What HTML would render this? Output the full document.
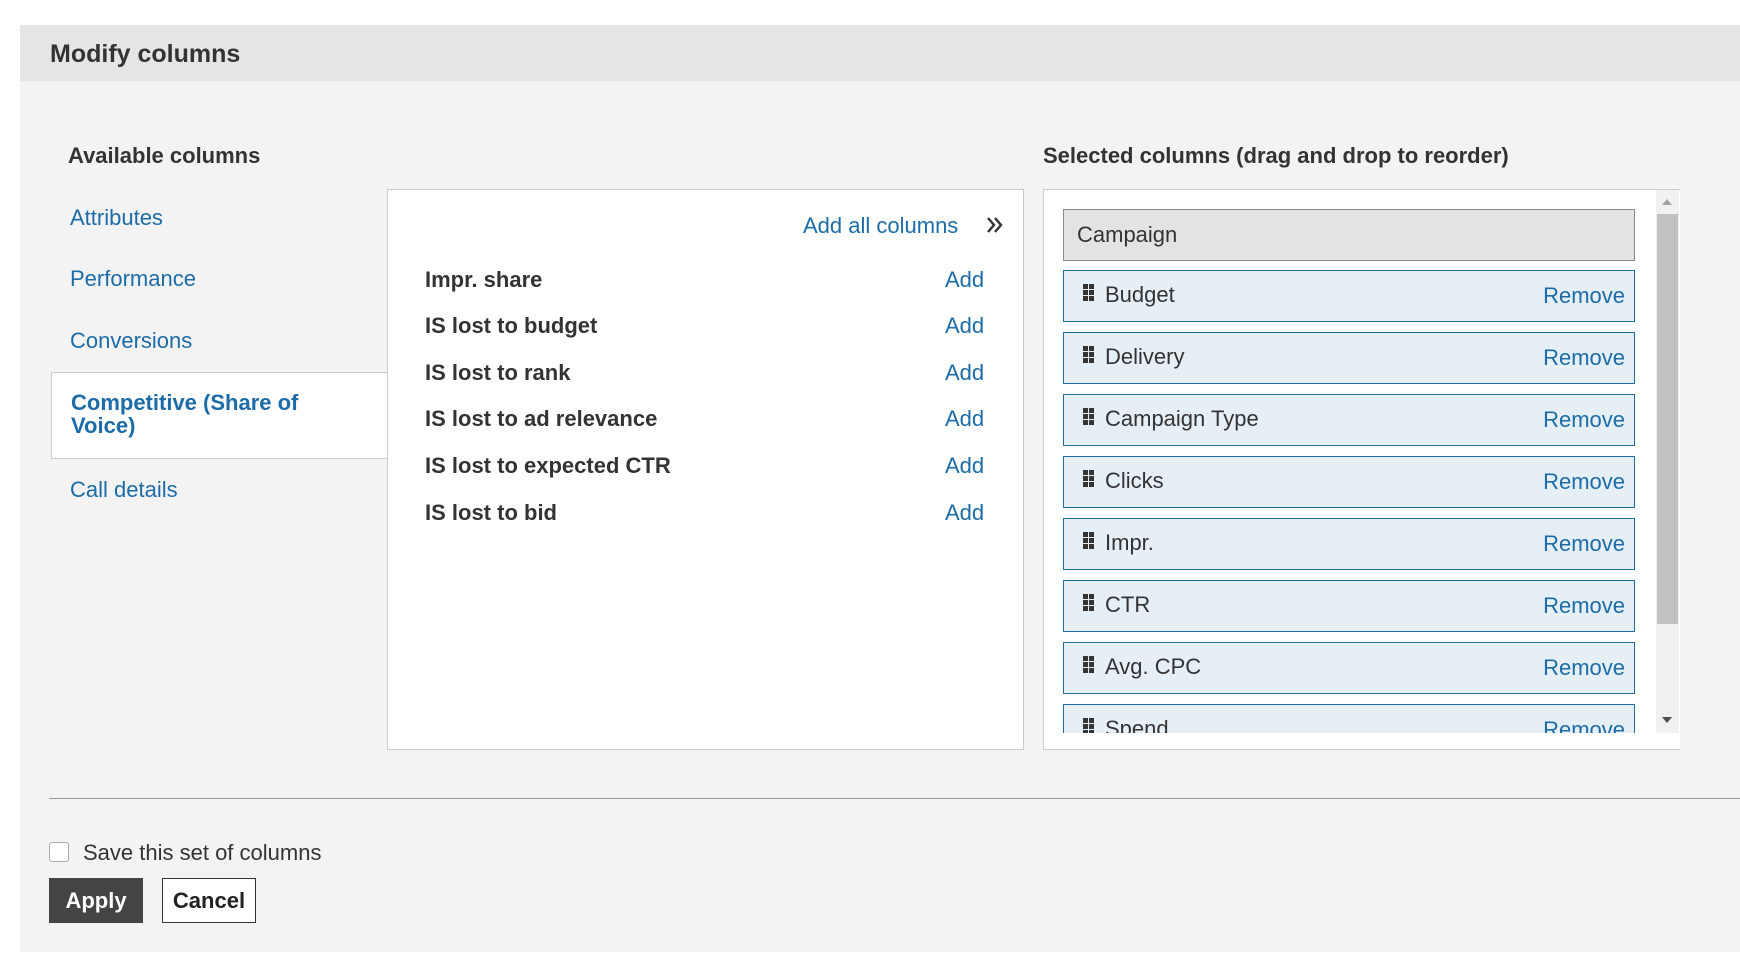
<!DOCTYPE html>
<html><head><style>
*{box-sizing:border-box;margin:0;padding:0}
body{width:1740px;height:973px;background:#fff;font-family:"Liberation Sans",Arial,sans-serif;position:relative;overflow:hidden;color:#333}
.a{position:absolute;white-space:nowrap}
.lnk{color:#1b6ca8}
.b{font-weight:bold}
.item{position:absolute;left:1063px;width:572px;height:52px;background:#e6eef6;border:1px solid #1f6ea5;font-size:22px}
.item .t{position:absolute;left:41px;top:11px;color:#333}
.item .r{position:absolute;right:9px;top:12px;color:#1b6ca8}
.grip{position:absolute;left:19px;top:13px;display:grid;grid-template-columns:5px 5px;gap:1px}
.grip i{width:5px;height:5px;background:#333;display:block}
</style></head><body>
<div class="a" style="left:20px;top:25px;width:1720px;height:56px;background:#e5e5e5"></div>
<div class="a b" style="left:50px;top:40px;font-size:25px;color:#333">Modify columns</div>
<div class="a" style="left:20px;top:81px;width:1720px;height:871px;background:#f3f3f3"></div>

<div class="a b" style="left:68px;top:143px;font-size:22px">Available columns</div>
<div class="a b" style="left:1043px;top:143px;font-size:22px">Selected columns (drag and drop to reorder)</div>

<div class="a lnk" style="left:70px;top:205px;font-size:22px">Attributes</div>
<div class="a lnk" style="left:70px;top:266px;font-size:22px">Performance</div>
<div class="a lnk" style="left:70px;top:328px;font-size:22px">Conversions</div>
<div class="a" style="left:51px;top:372px;width:340px;height:87px;background:#fff;border:1px solid #ccc;border-right:none"></div>
<div class="a lnk b" style="left:71px;top:391px;font-size:22px;line-height:23px">Competitive (Share of<br>Voice)</div>
<div class="a lnk" style="left:70px;top:477px;font-size:22px">Call details</div>

<div class="a" style="left:387px;top:189px;width:637px;height:561px;background:#fff;border:1px solid #ccc"></div>
<div class="a" style="left:388px;top:372px;width:2px;height:86px;background:#fff"></div>
<div class="a lnk" style="left:803px;top:213px;font-size:22px">Add all columns</div>
<svg class="a" style="left:985px;top:215px" width="20" height="20" viewBox="0 0 20 20"><path d="M3 3l6 7-6 7M10 3l6 7-6 7" fill="none" stroke="#333" stroke-width="2.4"/></svg>
<div class="a b" style="left:425px;top:267px;font-size:22px">Impr. share</div>
<div class="a b" style="left:425px;top:313px;font-size:22px">IS lost to budget</div>
<div class="a b" style="left:425px;top:360px;font-size:22px">IS lost to rank</div>
<div class="a b" style="left:425px;top:406px;font-size:22px">IS lost to ad relevance</div>
<div class="a b" style="left:425px;top:453px;font-size:22px">IS lost to expected CTR</div>
<div class="a b" style="left:425px;top:500px;font-size:22px">IS lost to bid</div>
<div class="a lnk" style="left:945px;top:267px;font-size:22px">Add</div>
<div class="a lnk" style="left:945px;top:313px;font-size:22px">Add</div>
<div class="a lnk" style="left:945px;top:360px;font-size:22px">Add</div>
<div class="a lnk" style="left:945px;top:406px;font-size:22px">Add</div>
<div class="a lnk" style="left:945px;top:453px;font-size:22px">Add</div>
<div class="a lnk" style="left:945px;top:500px;font-size:22px">Add</div>

<div class="a" style="left:1043px;top:189px;width:637px;height:561px;background:#fff;border:1px solid #ccc;border-right:none"></div>
<div class="a" style="left:1044px;top:190px;width:612px;height:543px;overflow:hidden">
<div style="position:relative;left:-1044px;top:-190px;">
<div class="a" style="left:1063px;top:209px;width:572px;height:52px;background:#e3e3e3;border:1px solid #888;font-size:22px"><span class="a" style="left:13px;top:12px">Campaign</span></div>
<div class="item" style="top:270px"><div class="grip"><i></i><i></i><i></i><i></i><i></i><i></i></div><span class="t">Budget</span><span class="r">Remove</span></div>
<div class="item" style="top:332px"><div class="grip"><i></i><i></i><i></i><i></i><i></i><i></i></div><span class="t">Delivery</span><span class="r">Remove</span></div>
<div class="item" style="top:394px"><div class="grip"><i></i><i></i><i></i><i></i><i></i><i></i></div><span class="t">Campaign Type</span><span class="r">Remove</span></div>
<div class="item" style="top:456px"><div class="grip"><i></i><i></i><i></i><i></i><i></i><i></i></div><span class="t">Clicks</span><span class="r">Remove</span></div>
<div class="item" style="top:518px"><div class="grip"><i></i><i></i><i></i><i></i><i></i><i></i></div><span class="t">Impr.</span><span class="r">Remove</span></div>
<div class="item" style="top:580px"><div class="grip"><i></i><i></i><i></i><i></i><i></i><i></i></div><span class="t">CTR</span><span class="r">Remove</span></div>
<div class="item" style="top:642px"><div class="grip"><i></i><i></i><i></i><i></i><i></i><i></i></div><span class="t">Avg. CPC</span><span class="r">Remove</span></div>
<div class="item" style="top:704px"><div class="grip"><i></i><i></i><i></i><i></i><i></i><i></i></div><span class="t">Spend</span><span class="r">Remove</span></div>
</div></div>
<div class="a" style="left:1656px;top:190px;width:23px;height:543px;background:#f1f1f1"></div>
<div class="a" style="left:1657px;top:214px;width:21px;height:410px;background:#c1c1c1"></div>
<svg class="a" style="left:1661px;top:197px" width="12" height="10"><path d="M1 8h10L6 2z" fill="#a3a3a3"/></svg>
<svg class="a" style="left:1661px;top:715px" width="12" height="10"><path d="M1 2h10L6 8z" fill="#505050"/></svg>

<div class="a" style="left:49px;top:798px;width:1691px;height:1px;background:#999"></div>
<div class="a" style="left:49px;top:842px;width:20px;height:20px;background:#fff;border:1px solid #aaa;border-radius:3px"></div>
<div class="a" style="left:83px;top:840px;font-size:22px">Save this set of columns</div>
<div class="a b" style="left:49px;top:878px;width:94px;height:45px;background:#444;color:#fff;font-size:22px;text-align:center;line-height:45px">Apply</div>
<div class="a b" style="left:162px;top:878px;width:94px;height:45px;background:#fff;border:1px solid #333;color:#222;font-size:22px;text-align:center;line-height:43px">Cancel</div>
</body></html>
